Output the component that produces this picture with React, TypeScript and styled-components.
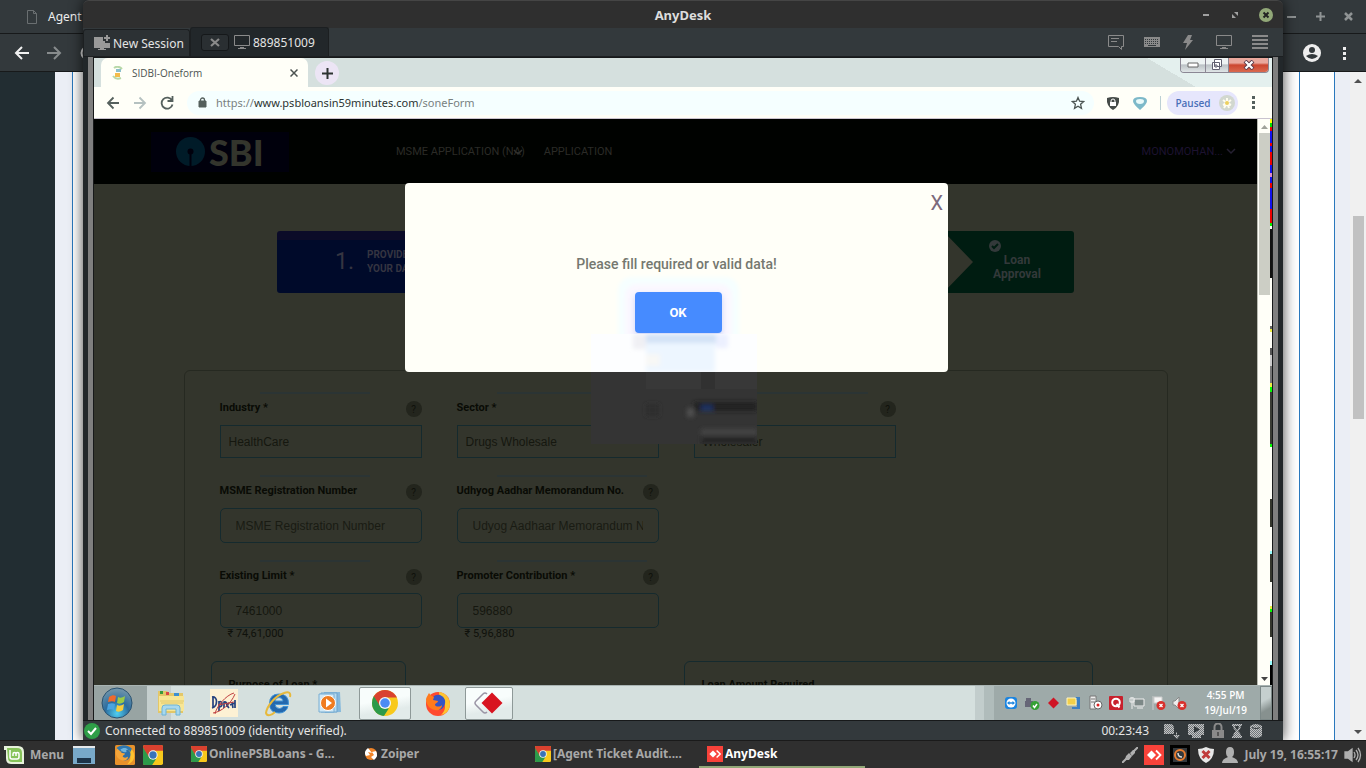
import React from 'react';
import styled, { createGlobalStyle, css } from 'styled-components';

const UI = '"Noto Sans", "Open Sans", sans-serif';
const REMOTE_UI = '"Open Sans", "Noto Sans", sans-serif';
const WEB = 'Roboto, "Liberation Sans", sans-serif';
const ARIAL = '"Liberation Sans", Arial, sans-serif';

const Global = createGlobalStyle`
  * { box-sizing: border-box; }
  body { margin: 0; font-family: ${UI}; background: #2e2e2e; }
  button { border: 0; padding: 0; background: none; font: inherit; color: inherit; display: flex; align-items: center; justify-content: center; }
  svg { display: block; flex: none; }
`;

/* ---------- desktop ---------- */
const Desktop = styled.div`
  position: relative;
  display: flex;
  flex-direction: column;
  height: 100vh;
  overflow: hidden;
`;
const BackWindow = styled.div`
  flex: 1;
  display: flex;
  flex-direction: column;
  min-height: 0;
`;
const BackBar = styled.div<{ $h: number }>`
  display: flex;
  align-items: center;
  justify-content: space-between;
  height: ${(p) => p.$h}px;
  background: #33393c;
  border-bottom: 1px solid #17191a;
  color: #eee;
  font-size: 12px;
`;
const BackGroup = styled.div<{ $gap: number; $pad: string }>`
  display: flex;
  align-items: center;
  gap: ${(p) => p.$gap}px;
  padding: ${(p) => p.$pad};
`;
const BackBody = styled.div`
  flex: 1;
  display: flex;
  min-height: 0;
`;
const Sidebar = styled.div`
  width: 55px;
  background: #222d32;
`;
const Gutter = styled.div<{ $w: number }>`
  width: ${(p) => p.$w}px;
  background: #ebeef5;
`;
const Panel = styled.div`
  flex: 1;
  display: flex;
  justify-content: flex-end;
  background: #fff;
  border: solid #2a78bd;
  border-width: 0 1px;
`;
const InnerPanel = styled.div`
  width: 35px;
  border-left: 1px solid #2a78bd;
`;
const ScrollTrack = styled.div`
  width: 16px;
  background: #f0f0f0;
  display: flex;
  flex-direction: column;
  align-items: center;
  justify-content: space-between;
  padding: 6px 0 5px;
`;
const BackThumb = styled.div`
  width: 11px;
  height: 203px;
  margin-bottom: 178px;
  background: #c1c1c1;
`;

/* ---------- AnyDesk window ---------- */
const AnyWindow = styled.section`
  position: absolute;
  left: 83px;
  right: 83px;
  top: 0;
  bottom: 28px;
  display: flex;
  flex-direction: column;
  border-radius: 6px 6px 0 0;
  background: #22272a;
  box-shadow: 0 0 14px rgba(0, 0, 0, 0.75);
`;
const TitleBar = styled.header`
  display: grid;
  grid-template-columns: 1fr auto 1fr;
  align-items: center;
  height: 28px;
  padding: 0 10px;
  border-top: 1px solid #454545;
  border-radius: 6px 6px 0 0;
  background: #2f2f2f;
  color: #ddd;
  font-size: 13px;
  font-weight: 700;
`;
const WinButtons = styled.div`
  grid-column: 3;
  justify-self: end;
  display: flex;
  align-items: center;
  gap: 19px;
`;
const TitleText = styled.span`
  grid-column: 2;
`;
const ToolRow = styled.div`
  display: flex;
  align-items: flex-end;
  height: 29px;
  background: #33393c;
  border-bottom: 1px solid #1c1f21;
`;
const SessionTab = styled.button<{ $active?: boolean }>`
  && {
    justify-content: flex-start;
    gap: 3px;
    height: ${(p) => (p.$active ? 29 : 27)}px;
    width: ${(p) => (p.$active ? 139 : 107)}px;
    padding-left: 10px;
    border: 1px solid #1c1f21;
    border-bottom: 0;
    border-radius: 3px 3px 0 0;
    background: ${(p) => (p.$active ? '#22272a' : '#2c3134')};
    color: #e4e4e4;
    font-size: 12px;
  }
`;
const TabClose = styled.span`
  display: flex;
  align-items: center;
  justify-content: center;
  width: 28px;
  height: 17px;
  margin-right: 2px;
  border: 1px solid #15181a;
  border-radius: 3px;
  background: #2a2f32;
`;
const ToolIcons = styled.div`
  display: flex;
  align-items: center;
  justify-content: space-between;
  width: 160px;
  height: 28px;
  margin: 0 15px 0 auto;
`;
const Stage = styled.div`
  flex: 1;
  display: flex;
  min-height: 0;
  margin: 0 5px;
  padding: 1px 0 0;
  border: solid #7f7f7f;
  border-width: 0 5px;
  background: #17191a;
`;
const Remote = styled.div`
  flex: 1;
  display: flex;
  flex-direction: column;
  min-width: 0;
  margin: 0 1px;
  background: #fffff8;
`;
const StatusBar = styled.footer`
  display: flex;
  align-items: center;
  gap: 5px;
  height: 20px;
  padding: 0 21px 0 1px;
  border-top: 1px solid #17191a;
  background: #33393c;
  color: #e4e4e4;
  font-size: 12px;
`;
const StatusIcons = styled.div`
  display: flex;
  align-items: center;
  justify-content: space-between;
  width: 98px;
  margin-left: 10px;
`;
const Grow = styled.span`
  flex: 1;
`;

/* ---------- remote browser ---------- */
const TabStrip = styled.div`
  display: flex;
  align-items: flex-start;
  height: 29px;
  padding: 0 3px 0 7px;
  background:
    linear-gradient(#e4f0ee, #e4f0ee) right / 76px 100% no-repeat,
    linear-gradient(to top right, transparent 50%, #e4f0ee 50%) right 76px top / 49px 29px no-repeat,
    #d5e0de;
`;
const BrowserTab = styled.div`
  display: flex;
  align-items: center;
  gap: 7px;
  width: 207px;
  height: 29px;
  padding: 0 10px;
  border-radius: 7px 7px 0 0;
  background: #fffff8;
  color: #4c5351;
  font-family: ${REMOTE_UI};
  font-size: 10px;
`;
const NewTab = styled.button`
  && {
    width: 24px;
    height: 24px;
    margin: 3px 0 0 7px;
    border-radius: 50%;
    background: #ece5f5;
  }
`;
const WinControls = styled.div`
  display: flex;
  height: 15px;
  border: 1px solid #8b8794;
  border-top: 0;
  border-radius: 0 0 4px 4px;
  overflow: hidden;
`;
const WinControl = styled.button<{ $w: number; $close?: boolean }>`
  && {
    width: ${(p) => p.$w}px;
    border-right: ${(p) => (p.$close ? 0 : 1)}px solid #8b8794;
    background: ${(p) =>
      p.$close
        ? 'linear-gradient(#e9a89d 0 35%, #cc4630 50%, #d9694f)'
        : 'linear-gradient(#eef3f3 0 40%, #bcc2c6 50%, #dfe5e6)'};
  }
`;
const AddressRow = styled.div`
  display: flex;
  align-items: center;
  height: 32px;
  padding: 0 6px 0 12px;
  border-bottom: 1px solid #c9c3cf;
  background: #fffff8;
`;
const NavIcons = styled.div`
  display: flex;
  gap: 13px;
  width: 81px;
`;
const Omnibox = styled.div`
  flex: 1;
  display: flex;
  align-items: center;
  gap: 9px;
  height: 24px;
  padding: 0 9px 0 11px;
  border-radius: 12px;
  background: #f5ffff;
  color: #79817f;
  font-family: ${UI};
  font-size: 11px;
`;
const UrlText = styled.div`
  flex: 1;
  outline: none;
`;
const Host = styled.span`
  color: #2c3331;
`;
const Extensions = styled.div`
  display: flex;
  align-items: center;
  gap: 13px;
  padding: 0 6px 0 12px;
`;
const Divider = styled.span`
  width: 1px;
  height: 14px;
  background: #bcd0d4;
`;
const Profile = styled.button`
  && {
    gap: 8px;
    width: 71px;
    height: 24px;
    margin-right: 14px;
    padding-left: 5px;
    border-radius: 12px;
    background: #e6e6fc;
    color: #4a6fb8;
    font-family: ${REMOTE_UI};
    font-size: 10px;
    font-weight: 600;
  }
`;

/* ---------- web page ---------- */
const Viewport = styled.div`
  flex: 1;
  display: flex;
  min-height: 0;
`;
const Page = styled.main`
  position: relative;
  flex: 1;
  min-width: 0;
  overflow: hidden;
  background: #33352c;
  font-family: ${WEB};
`;
const SiteNav = styled.nav`
  display: flex;
  align-items: center;
  height: 65px;
  padding: 0 21px 0 57px;
  background: #000200;
  color: #2b2b27;
  font-size: 11px;
`;
const Brand = styled.a`
  display: flex;
  align-items: center;
  gap: 4px;
  width: 138px;
  height: 40px;
  margin-right: 107px;
  padding-left: 25px;
  background: #00000c;
  color: #33352c;
  font-family: Lato, ${WEB};
  font-size: 36px;
  font-weight: 900;
  line-height: 40px;
  text-decoration: none;
`;
const NavLink = styled.a<{ $purple?: boolean }>`
  display: flex;
  align-items: center;
  gap: 3px;
  margin-right: ${(p) => (p.$purple ? 0 : 20)}px;
  color: ${(p) => (p.$purple ? '#1d1230' : 'inherit')};
  text-decoration: none;
`;
const Chevron = styled.svg<{ $over?: boolean }>`
  margin-left: ${(p) => (p.$over ? -16 : 0)}px;
`;
const Steps = styled.div`
  display: flex;
  justify-content: space-between;
  max-width: 797px;
  height: 62px;
  margin: 47px auto 0;
`;
const Step = styled.div<{ $done?: boolean }>`
  display: flex;
  align-items: center;
  width: 200px;
  border-radius: 3px;
  font-weight: 700;
  ${(p) =>
    p.$done
      ? css`
          background: #001c11;
          color: #33393a;
          font-size: 12px;
          line-height: 14px;
          clip-path: polygon(69px 0, 100% 0, 100% 100%, 69px 100%, 99px 50%);
        `
      : css`
          padding: 0 0 0 58px;
          gap: 13px;
          background: linear-gradient(#0b0b28 0 9px, #000a2a 9px);
          color: #353541;
          font-size: 10px;
          line-height: 14px;
        `}
`;
const StepNumber = styled.span`
  font-size: 23px;
  font-weight: 400;
`;
const DoneText = styled.div`
  display: flex;
  flex-direction: column;
  align-items: center;
  width: 70px;
  margin: 0 0 3px 108px;
  text-align: center;
`;
const DoneTick = styled.svg`
  margin: 0 44px 1px 0;
`;
const FormCard = styled.form`
  max-width: 984px;
  height: 400px;
  margin: 77px auto 0;
  padding: 30px 26px 0;
  border: 1px solid #262921;
  border-radius: 6px;
`;
const FieldGrid = styled.div`
  display: grid;
  grid-template-columns: repeat(3, 1fr);
  column-gap: 35px;
  row-gap: 26px;
  max-width: 676px;
  margin-left: 9px;
`;
const Field = styled.div<{ $streak?: number }>`
  position: relative;
  display: grid;
  grid-template-columns: 1fr 16px;
  row-gap: 8px;
  align-content: start;
  &::before {
    content: '';
    position: absolute;
    top: -9px;
    left: 40px;
    width: ${(p) => p.$streak ?? 110}px;
    height: 2px;
    background: #2b3434;
  }
`;
const FieldLabel = styled.label`
  display: block;
  color: #090b05;
  font-size: 11px;
  font-weight: 700;
  line-height: 13px;
  white-space: nowrap;
`;
const Help = styled.button`
  && {
    width: 16px;
    height: 16px;
    border-radius: 50%;
    background: #23251d;
    color: #0f110b;
    font-size: 10px;
  }
`;
const FieldInput = styled.input<{ $square?: boolean }>`
  grid-column: 1 / -1;
  width: 100%;
  min-width: 0;
  height: ${(p) => (p.$square ? 33 : 35)}px;
  padding: 0 ${(p) => (p.$square ? 8 : 15)}px;
  border: 1px solid #152a2e;
  border-radius: ${(p) => (p.$square ? 0 : 5)}px;
  background: transparent;
  color: #15170f;
  font-family: ${ARIAL};
  font-size: 12px;
  outline: none;
  &::placeholder { color: #191b13; opacity: 1; }
`;
const Hint = styled.output`
  grid-column: 1 / -1;
  margin-top: -8px;
  padding-left: 8px;
  color: #0f110b;
  font-size: 11px;
  line-height: 12px;
`;
const BoxRow = styled.div`
  display: flex;
  justify-content: space-between;
  margin: 21px 48px 0 0;
`;
const Box = styled.div<{ $w: number }>`
  width: ${(p) => p.$w}px;
  height: 90px;
  padding: 16px 17px;
  border: 1px solid #152a2e;
  border-radius: 6px;
`;

const DialogLayer = styled.div`
  position: absolute;
  inset: 64px 0 auto 2px;
  display: flex;
  justify-content: center;
`;
const Dialog = styled.div`
  position: relative;
  display: flex;
  flex-direction: column;
  align-items: center;
  width: 543px;
  height: 189px;
  padding-top: 72px;
  border-radius: 4px;
  background: #fffff8;
  color: #757870;
  font-size: 14px;
  font-weight: 500;
  line-height: 18px;
`;
const DialogClose = styled.button`
  && {
    position: absolute;
    top: 9px;
    right: 5px;
    color: #7c6a7c;
    font-size: 20px;
    font-weight: 400;
    line-height: 22px;
  }
`;
const OkButton = styled.button`
  && {
    position: relative;
    width: 87px;
    height: 41px;
    margin: 19px 0 0 3px;
    border-radius: 4px;
    background: #468bff;
    color: #fff;
    font-size: 13px;
    font-weight: 700;
    box-shadow: 0 3px 6px rgba(70, 110, 220, 0.25), 0 2px 4px 10px #fbf8ff, 0 2px 4px 17px #f6ffff;
  }
`;
const Artifact = styled.svg`
  position: absolute;
  top: 151px;
  left: 186px;
`;
const RemoteScroll = styled.div`
  display: flex;
  flex-direction: column;
  align-items: center;
  width: 13px;
  padding: 6px 0 4px;
  border-left: 1px solid #b9bbb2;
  background: #fffff8;
`;
const RemoteThumb = styled.div`
  width: 11px;
  height: 162px;
  margin: 4px 0 auto;
  background: #cccec5;
`;
const GlitchStrip = styled.div`
  width: 2px;
  background: linear-gradient(
    #ff0 0 4px, #0d0 4px 8px, #e00 8px 12px, #11e 12px 24px, #e00 24px 27px, #11e 27px 33px,
    #e00 33px 46px, #11e 46px 54px, #d8c 54px 58px, #11e 58px 64px, #e00 64px 69px, #11e 69px 90px,
    #e00 90px 104px, #0e0 104px 107px, #fffff8 107px 110px, #111 110px 159px, #fffff8 159px 207px,
    #666 207px 210px, #ee4 210px 213px, #fffff8 213px 229px, #555 229px 236px, #ccc 236px 247px,
    #777 247px 264px, #ee4 264px 268px, #0f0 268px 273px, #3a3c34 273px 325px, #0f0 325px 328px,
    #fffff8 328px 380px, #33352c 380px 408px, #fffff8 408px 432px, #9ff 432px 435px, #33352c 435px 463px,
    #fffff8 463px 487px, #ee4 487px 490px, #0f0 490px 493px, #33352c 493px 518px, #fffff8 518px 542px,
    #9ff 542px 546px, #000 546px
  );
`;

/* ---------- remote taskbar ---------- */
const RemoteTaskbar = styled.div`
  display: flex;
  align-items: center;
  height: 35px;
  border-top: 1px solid #a9b4b3;
  background: linear-gradient(90deg, #98a4a3 0 53px, #c5cfce 53px 77px, transparent 77px), #d5e0de;
`;
const AppSlot = styled.button<{ $w: number; $open?: boolean }>`
  && {
    width: ${(p) => p.$w}px;
    height: 33px;
    border-radius: 2px;
    ${(p) =>
      p.$open &&
      css`
        border: 1px solid #8e9998;
        background: linear-gradient(170deg, #f8fdfc 0 40%, #e2ebea 70%);
      `}
  }
`;
const OpenApps = styled.div`
  display: flex;
  margin-left: 9px;
`;
const Tray = styled.div`
  display: flex;
  align-items: center;
  align-self: stretch;
  gap: 5px;
  margin-left: auto;
  padding: 0 13px 0 28px;
  background: linear-gradient(90deg, #c2cdcc 0 9px, #b0bcbb 9px 19px, #9eaaa9 19px);
`;
const RemoteClock = styled.div`
  margin-left: 12px;
  color: #fff;
  font-family: ${REMOTE_UI};
  font-size: 10px;
  font-weight: 600;
  line-height: 15px;
  text-align: center;
`;
const ShowDesktop = styled.div`
  align-self: stretch;
  width: 12px;
  border: 1px solid #7c8887;
  background: linear-gradient(150deg, #c5cfce 0 40%, #87918f 70%);
`;

/* ---------- host panel ---------- */
const HostPanel = styled.footer`
  position: relative;
  display: flex;
  align-items: center;
  height: 28px;
  padding: 0 4px;
  border-top: 1px solid #1a1a1a;
  background: #2f2f2f;
  color: #a8a8a8;
  font-size: 12px;
  font-weight: 700;
`;
const Launchers = styled.div`
  display: flex;
  align-items: center;
  width: 179px;
`;
const MenuButton = styled.button`
  && {
    gap: 6px;
    margin-right: 9px;
  }
`;
const QuickIcons = styled.div`
  display: flex;
  gap: 8px;
  margin-left: 20px;
`;
const Tasks = styled.div`
  display: flex;
  align-self: stretch;
  gap: 6px;
`;
const Task = styled.button<{ $active?: boolean }>`
  && {
    justify-content: flex-start;
    gap: 2px;
    width: 166px;
    padding: 0 8px;
    border-bottom: 2px solid ${(p) => (p.$active ? '#92a878' : 'transparent')};
    color: ${(p) => (p.$active ? '#fff' : '#a8a8a8')};
  }
`;
const HostTray = styled.div`
  display: flex;
  align-items: center;
  gap: 6px;
  margin-left: auto;
`;

/* ---------- icons ---------- */
const Line = ({ d, w = 16, h = 16, s = '#999', sw = 1.5 }: { d: string; w?: number; h?: number; s?: string; sw?: number }) => (
  <svg width={w} height={h} viewBox={`0 0 ${w} ${h}`} fill="none" stroke={s} strokeWidth={sw}>
    <path d={d} />
  </svg>
);

const ChromeIcon = ({ size, square }: { size: number; square?: boolean }) => (
  <svg width={size} height={size} viewBox="0 0 24 24">
    <defs>
      <clipPath id={square ? 'chromeSq' : 'chromeRd'}>
        {square ? <rect width="24" height="24" rx="2" /> : <circle cx="12" cy="12" r="12" />}
      </clipPath>
    </defs>
    <g clipPath={`url(#${square ? 'chromeSq' : 'chromeRd'})`}>
      <path d="M0 0h24v24H0z" fill="#f8c91c" />
      <path d="M0 0h24v7H12L7 15 0 4z" fill="#d9412f" />
      <path d="M0 3l7.500 12 8 2L11 24H0z" fill="#2d9a4a" />
      <circle cx="12" cy="12" r="5.600" fill="#f4f4f4" />
      <circle cx="12" cy="12" r="4.400" fill={square ? '#3873b8' : '#4c8bf5'} />
    </g>
  </svg>
);

const FirefoxIcon = ({ size, square }: { size: number; square?: boolean }) => (
  <svg width={size} height={size} viewBox="0 0 26 26">
    {square ? <rect width="26" height="26" rx="2" fill="#e8912a" /> : <circle cx="13" cy="14" r="12" fill="#ff4a2e" />}
    <path d="M14 2c5 0 11 5 11 12 0 6-4 10-9 11 4-4 5-8 3-12-2-3-5-5-5-11z" fill="#ffc42e" />
    <path d="M8 7c4-4 10-2 12 3 1 6-3 10-7 10-5 0-8-4-7-8z" fill={square ? '#2c6ea8' : '#3454c4'} />
    <path d="M1 9c1-3 2-4 3-6 1 2 3 3 5 4l-1 3 5 1c0 2-3 2-3 4 1 2 5 2 7 0 0 4-4 6-7 5C4 19 1 14 1 9z" fill={square ? '#f4a53a' : '#ff7a1c'} />
    {square && <path d="M2 4c5-5 15-5 20 1l-2 4c-3-4-9-4-12 0z" fill="#2f78b0" />}
    {square && <path d="M7 6c3-3 8-3 10 0-2 0-3 1-2 3-3 1-6 0-8-3z" fill="#6fb4dd" />}
  </svg>
);

const AnyDeskTile = ({ size }: { size: number }) => (
  <svg width={size} height={size} viewBox="0 0 20 20">
    <rect width="20" height="20" fill="#f8423a" />
    <path d="M7.500 5.500L12 10l-4.500 4.500L3 10z" fill="#fff" />
    <path d="M12 5.500l4.500 4.500-4.500 4.500" fill="none" stroke="#fff" strokeWidth="1.800" />
  </svg>
);

const StartOrb = () => (
  <svg width="32" height="32" viewBox="0 0 32 32">
    <defs>
      <radialGradient id="orb" cx="50%" cy="85%" r="80%">
        <stop offset="0" stopColor="#4fd0f2" />
        <stop offset=".5" stopColor="#2c6c9e" />
        <stop offset="1" stopColor="#6f94aa" />
      </radialGradient>
    </defs>
    <circle cx="16" cy="16" r="15" fill="url(#orb)" stroke="#2a5270" />
    <path d="M8 10c3-2 5-2 7-1l-1 6c-2-1-4-1-7 0z" fill="#ee6a2e" />
    <path d="M17 10c2 1 4 1 7-1l-1 6c-3 2-5 2-7 1z" fill="#9ccb46" />
    <path d="M7 17c3-1 5-1 7 0l-1 6c-2-1-4-1-7 0z" fill="#4aa4e0" />
    <path d="M16 18c2 1 4 1 7-1l-1 6c-3 2-5 2-7 1z" fill="#f8cc3c" />
  </svg>
);

const ExplorerIcon = () => (
  <svg width="30" height="28" viewBox="0 0 30 28">
    <path d="M2 2h9l2 2h14v20H2z" fill="#e3c768" />
    <path d="M3 7h25v15H3z" fill="#f8e694" />
    <path d="M4 2h3v3H4z" fill="#3a9a3c" />
    <path d="M10 3h3v3h-3z" fill="#d44" />
    <path d="M18 4h5v3h-5z" fill="#3d8fd0" />
    <path d="M4 12h24M5 14h22" stroke="#e0c86c" />
    <path d="M6 26v-7q0-3 3-3h12q3 0 3 3v7h-4v-6H10v6z" fill="#a7d8ee" stroke="#6db3d6" />
  </svg>
);

const ScriptIcon = () => (
  <svg width="28" height="28" viewBox="0 0 28 28" fill="none">
    <path d="M0 0h28v28H0z" fill="#fdf1d4" />
    <path d="M3 8v11M2 8c6-1 6 9 0 11M9 12v10M9 13c4-2 4 5 0 5M14 19v-6q3-1 3 5M19 14q-3 2 0 5M22 13l1 6M20 16l5-2M25 11v8" stroke="#24417e" strokeWidth="1.700" />
    <path d="M24 4C16 6 6 18 5 25M3 24c8-1 18-9 22-19M8 16l16-3" stroke="#c04040" />
  </svg>
);

const IeIcon = () => (
  <svg width="28" height="28" viewBox="0 0 28 28" fill="none">
    <path d="M24.500 15.500H11q.500 4 4.500 4 2.500 0 3.500-2h5q-2 6.500-9 6.500Q5.500 24 5.500 14.500 5.500 5 15 5q10 0 9.500 10.500zM11 12h8q-.500-3.500-4-3.500T11 12z" fill="#2468ae" fillRule="evenodd" stroke="#3f93d6" />
    <path d="M26 8c1-4-1-6-6-4C11 7 3 17 2 24c1 4 6 2 9-1" stroke="#e7b93c" strokeWidth="2" />
  </svg>
);

const PlayerIcon = () => (
  <svg width="24" height="24" viewBox="0 0 24 24">
    <path d="M6 1h16l1 20-16 1z" fill="#87b9dc" />
    <path d="M3 2h16v19H3z" fill="#b8dbef" stroke="#6fa5cd" />
    <path d="M1 3h15v18H1z" fill="#cfe8f6" stroke="#78aed3" />
    <circle cx="10" cy="12" r="7.500" fill="#f07c20" stroke="#fff" />
    <path d="M8 7.500l6 4.500-6 4.500z" fill="#fff" />
  </svg>
);

const RemoteAnyDesk = () => (
  <svg width="30" height="24" viewBox="0 0 30 24">
    <path d="M13 3q-2-2-4 0L2 10q-2 2 0 4l7 7q2 2 4 0" fill="none" stroke="#9a95a5" strokeWidth="1.500" />
    <path d="M18 1.500L28.500 12 18 22.500 7.500 12z" fill="#d81420" />
  </svg>
);

const PixelIcon = ({ shape, w = 14 }: { shape: string; w?: number }) => (
  <svg width={w} height="16" viewBox={`0 0 ${w} 16`}>
    <defs>
      <pattern id="dither" width="2" height="2" patternUnits="userSpaceOnUse">
        <path d="M0 0h1v1H0zM1 1h1v1H1z" fill="#c4c4c4" />
        <path d="M1 0h1v1H1zM0 1h1v1H0z" fill="#70767a" />
      </pattern>
    </defs>
    <path d={shape} fill="url(#dither)" fillRule="evenodd" />
  </svg>
);

const FormField = (props: { id: string; label: string; value?: string; placeholder?: string; square?: boolean; hint?: string; streak?: number }) => (
  <Field $streak={props.streak}>
    <FieldLabel htmlFor={props.id}>{props.label}</FieldLabel>
    <Help type="button" aria-label={`Help: ${props.label}`}>?</Help>
    <FieldInput id={props.id} $square={props.square} defaultValue={props.value} placeholder={props.placeholder} />
    {props.hint && <Hint htmlFor={props.id}>{props.hint}</Hint>}
  </Field>
);

export default function App() {
  return (
    <Desktop>
      <Global />
      <BackWindow>
        <BackBar $h={34}>
          <BackGroup $gap={11} $pad="0 0 0 27px">
            <Line w={10} h={14} s="#6a6f71" sw={1} d="M.500.500h6l3 3v10h-9zM6.500.500v3h3" />
            <span>Agent</span>
          </BackGroup>
          <BackGroup $gap={18} $pad="0 13px 0 0">
            <Line w={11} h={11} s="#8f9394" sw={2} d="M1 6h9" />
            <Line w={11} h={11} s="#8f9394" sw={2} d="M1 5.500h9M5.500 1v9" />
            <Line w={9} h={11} s="#8f9394" sw={2.5} d="M1 2l7 7M8 2l-7 7" />
          </BackGroup>
        </BackBar>
        <BackBar $h={38}>
          <BackGroup $gap={16} $pad="0 0 0 14px">
            <Line s="#f1f1f1" sw={2} d="M15 8H2M8 2L2 8l6 6" />
            <Line s="#888c8d" sw={2} d="M1 8h13M8 2l6 6-6 6" />
            <Line s="#ddd" sw={2} d="M14 4a6 6 0 1 0 0 8" />
          </BackGroup>
          <BackGroup $gap={22} $pad="0 20px 0 0">
            <svg width="18" height="18" viewBox="0 0 18 18">
              <circle cx="9" cy="9" r="9" fill="#eee" />
              <circle cx="9" cy="6" r="3" fill="#33393c" />
              <path d="M3 12q6-4 12 0-6 6-12 0z" fill="#33393c" />
            </svg>
            <svg width="3" height="14" viewBox="0 0 3 14" fill="#eee"><path d="M0 1h3v3H0zM0 6h3v3H0zM0 11h3v3H0z" /></svg>
          </BackGroup>
        </BackBar>
        <BackBody>
          <Sidebar />
          <Gutter $w={17} />
          <Panel><InnerPanel /></Panel>
          <Gutter $w={15} />
          <ScrollTrack>
            <svg width="8" height="5"><path d="M0 5l4-4 4 4z" fill="#505050" /></svg>
            <BackThumb />
            <svg width="8" height="5"><path d="M0 0l4 4 4-4z" fill="#505050" /></svg>
          </ScrollTrack>
        </BackBody>
      </BackWindow>

      <AnyWindow>
        <TitleBar>
          <TitleText>AnyDesk</TitleText>
          <WinButtons>
            <button aria-label="Minimize"><Line w={10} h={10} s="#a0a0a0" sw={2} d="M2 5h6" /></button>
            <button aria-label="Restore"><svg width="10" height="10" fill="#a0a0a0"><path d="M4 2h4v4zM2 4v4h4z" /></svg></button>
            <button aria-label="Close">
              <svg width="14" height="14"><circle cx="7" cy="7" r="7" fill="#92a878" /><path d="M4.500 4.500l5 5M9.500 4.500l-5 5" stroke="#222" strokeWidth="2" /></svg>
            </button>
          </WinButtons>
        </TitleBar>
        <ToolRow>
          <SessionTab>
            <svg width="16" height="16" viewBox="0 0 16 16" fill="#999"><path d="M0 2h9v4h2v2h5v5H0zM6 13h4v1h2v1H4v-1h2zM12 0h2v2h2v2h-2v2h-2V4h-2V2h2z" /></svg>
            New Session
          </SessionTab>
          <SessionTab $active>
            <TabClose><Line w={12} h={9} s="#8a8a8a" sw={2.2} d="M2 1l8 7M10 1L2 8" /></TabClose>
            <Line s="#8a8a8a" sw={1} h={14} d="M.500.500h15v10h-15zM6 12.500h4M4 13.500h8" />
            889851009
          </SessionTab>
          <ToolIcons>
            <button aria-label="Chat"><Line h={15} s="#8a8a8a" sw={1} d="M.500.500h15v11h-2v3l-3-3H.500zM3 3.500h8M3 6.500h6" /></button>
            <button aria-label="Keyboard"><svg width="16" height="10"><path d="M0 0h16v10H0z" fill="#8a8a8a" /><path d="M1 2.500h14M1 4.500h14M1 6.500h14" stroke="#33393c" strokeDasharray="1 1" /><path d="M4 8.500h8" stroke="#33393c" /></svg></button>
            <button aria-label="Actions"><svg width="16" height="15"><path d="M8 0h4L10 5h3L5 15l2-7H3z" fill="#8a8a8a" /></svg></button>
            <button aria-label="Display"><Line h={14} s="#8a8a8a" sw={1} d="M.500.500h15v10h-15zM6 12.500h4M4 13.500h8" /></button>
            <button aria-label="Menu"><Line h={14} s="#8a8a8a" sw={2} d="M0 1h16M0 5h16M0 9h16M0 13h16" /></button>
          </ToolIcons>
        </ToolRow>

        <Stage>
          <Remote>
            <TabStrip>
              <BrowserTab>
                <svg width="14" height="14" viewBox="0 0 14 14" fill="none">
                  <path d="M3 2q4-3 8 1M2 10q3 4 8 2" stroke="#b8d8a8" strokeWidth="2" />
                  <path d="M5 3h5v3H5z" fill="#8cc0cc" /><path d="M4 7h5v4H4z" fill="#f4bc4a" />
                </svg>
                <span>SIDBI-Oneform</span>
                <Grow />
                <button aria-label="Close tab"><Line w={8} h={8} s="#4c5351" d="M.500.500l7 7M7.500.500l-7 7" /></button>
              </BrowserTab>
              <NewTab aria-label="New tab"><Line w={11} h={11} s="#2c3331" sw={2} d="M5.500 0v11M0 5.500h11" /></NewTab>
              <Grow />
              <WinControls>
                <WinControl $w={25} aria-label="Minimize"><svg width="12" height="6"><path d="M1 1h10v4H1z" fill="#fff" stroke="#666" /></svg></WinControl>
                <WinControl $w={23} aria-label="Restore"><svg width="12" height="12" fill="#fff" stroke="#606070"><path d="M3.500.500h7v7h-7zM1.500 3.500h7v7h-7z" /><path d="M4 6h2v2H4z" /></svg></WinControl>
                <WinControl $w={39} $close aria-label="Close"><svg width="12" height="10"><path d="M2 1l8 8M10 1L2 9" stroke="#5a3a4a" strokeWidth="4" /><path d="M2.500 1.500l7 7M9.500 1.500l-7 7" stroke="#fff" strokeWidth="2.200" /></svg></WinControl>
              </WinControls>
            </TabStrip>
            <AddressRow>
              <NavIcons>
                <button aria-label="Back"><Line w={14} h={14} s="#55605d" sw={1.8} d="M13 7H2M7.500 1.500L2 7l5.500 5.500" /></button>
                <button aria-label="Forward"><Line w={14} h={14} s="#b5c1c0" sw={1.8} d="M1 7h11M6.500 1.500L12 7l-5.500 5.500" /></button>
                <button aria-label="Reload"><Line w={14} h={14} s="#55605d" sw={1.8} d="M12 4.500a5.500 5.500 0 1 0 .500 4M12.500 0v5h-5" /></button>
              </NavIcons>
              <Omnibox>
                <svg width="9" height="11"><path d="M1 4h7v6H1z" fill="#55605d" stroke="#55605d" /><path d="M2.500 4V3a2 2 0 0 1 4 0v1" fill="none" stroke="#55605d" strokeWidth="1.300" /></svg>
                <UrlText role="textbox" aria-label="Address" contentEditable suppressContentEditableWarning>
                  https://<Host>www.psbloansin59minutes.com</Host>/soneForm
                </UrlText>
                <button aria-label="Bookmark"><Line w={14} h={14} s="#4c5553" sw={1.3} d="M7 1.500l1.600 3.700 4 .400-3 2.700.900 4L7 10.200l-3.500 2.100.900-4-3-2.700 4-.400z" /></button>
              </Omnibox>
              <Extensions>
                <svg width="14" height="14"><path d="M1 2q6-2 12 0 1 8-6 12Q0 10 1 2z" fill="#454b48" /><path d="M4 6h6v4H4z" fill="#fff" /><path d="M5 6V5a2 2 0 0 1 4 0v1" stroke="#fff" fill="none" /></svg>
                <svg width="14" height="14"><path d="M0 5q0-4 7-4t7 4q0 3-7 9Q0 8 0 5z" fill="#7db9c9" /><path d="M3 5q0-2 4-2t4 2q0 3-4 3T3 5z" fill="#eafafa" /></svg>
                <Divider />
              </Extensions>
              <Profile>
                Paused
                <svg width="16" height="16"><circle cx="8" cy="8" r="8" fill="#d2d8cf" /><path d="M8 8V3M8 8l4-3M8 8l4 2M8 8l2 5M8 8l-3 5M8 8l-4 2M8 8L4 5" stroke="#fffdf0" strokeWidth="2" /><circle cx="8" cy="8" r="2" fill="#ecd060" /></svg>
              </Profile>
              <button aria-label="Browser menu"><svg width="14" height="13" fill="#55605d"><path d="M0 0h3v3H0zM0 5h3v3H0zM0 10h3v3H0z" /></svg></button>
            </AddressRow>

            <Viewport>
              <Page>
                <SiteNav>
                  <Brand href="#home">
                    <svg width="29" height="29"><circle cx="14.500" cy="14.500" r="14.500" fill="#001b28" /><circle cx="14.500" cy="14.500" r="3" fill="#00000c" /><path d="M13.500 15h2v14h-2z" fill="#00000c" /></svg>
                    SBI
                  </Brand>
                  <NavLink href="#msme">
                    MSME APPLICATION (NA)
                    <Chevron $over width="12" height="8" fill="none" stroke="#30302c" strokeWidth="1.500"><path d="M2 2l4 4 4-4" /></Chevron>
                  </NavLink>
                  <NavLink href="#application">APPLICATION</NavLink>
                  <Grow />
                  <NavLink href="#account" $purple>
                    MONOMOHAN...
                    <Chevron width="10" height="7" fill="none" stroke="#242030" strokeWidth="1.500"><path d="M1 1l4 4 4-4" /></Chevron>
                  </NavLink>
                </SiteNav>
                <Steps>
                  <Step>
                    <StepNumber>1.</StepNumber>
                    <span>PROVIDE<br />YOUR DATA</span>
                  </Step>
                  <Step $done>
                    <DoneText>
                      <DoneTick width="12" height="12"><circle cx="6" cy="6" r="6" fill="#33393a" /><path d="M3 6l2 2 4-4" stroke="#001c11" strokeWidth="2" fill="none" /></DoneTick>
                      <span>Loan<br />Approval</span>
                    </DoneText>
                  </Step>
                </Steps>
                <FormCard>
                  <FieldGrid>
                    <FormField id="industry" label="Industry *" value="HealthCare" square />
                    <FormField id="sector" label="Sector *" value="Drugs Wholesale" square streak={150} />
                    <FormField id="subsector" label="" value="Wholesaler" square streak={134} />
                    <FormField id="msme" label="MSME Registration Number" placeholder="MSME Registration Number" />
                    <FormField id="udyog" label="Udhyog Aadhar Memorandum No." placeholder="Udyog Aadhaar Memorandum Number" streak={150} />
                    <span />
                    <FormField id="limit" label="Existing Limit *" value="7461000" hint="₹ 74,61,000" />
                    <FormField id="promoter" label="Promoter Contribution *" value="596880" hint="₹ 5,96,880" streak={150} />
                  </FieldGrid>
                  <BoxRow>
                    <Box $w={195}><FieldLabel as="span">Purpose of Loan *</FieldLabel></Box>
                    <Box $w={409}><FieldLabel as="span">Loan Amount Required</FieldLabel></Box>
                  </BoxRow>
                </FormCard>
                <DialogLayer>
                  <Dialog role="dialog" aria-label="Validation message">
                    <DialogClose aria-label="Close">X</DialogClose>
                    Please fill required or valid data!
                    <OkButton>OK</OkButton>
                    <Artifact width="166" height="110" aria-hidden="true">
                      <defs>
                        <filter id="soft"><feGaussianBlur stdDeviation="2" /></filter>
                      </defs>
                      <path d="M0 0h166v38H0z" fill="#fdfeff" />
                      <g filter="url(#soft)">
                        <path d="M55 0h70v10H55z" fill="#d3e2f6" />
                        <path d="M55 9h69v29H55z" fill="#edf6ff" />
                        <path d="M42 0h13v15H42z" fill="#f0f0f4" />
                        <path d="M125 0h12v14h-12z" fill="#ecf0ff" />
                        <path d="M55 20h14v12H55z" fill="#f8f8f6" />
                      </g>
                      <path d="M0 38h166v72H0z" fill="#343434" />
                      <path d="M55 38h111v17H55z" fill="#383838" />
                      <path d="M110 38h14v17h-14z" fill="#313131" />
                      <g filter="url(#soft)">
                        <path d="M103 68h63v9h-63z" fill="#202020" />
                        <path d="M110 71h12v6h-12z" fill="#1a3262" />
                        <path d="M96 74h7v9h-7z" fill="#505050" />
                        <path d="M55 70h13v12H55z" fill="#2d2d2d" />
                        <path d="M110 95h56v6h-56z" fill="#444" />
                        <path d="M110 103h56v7h-56z" fill="#252525" />
                      </g>
                    </Artifact>
                  </Dialog>
                </DialogLayer>
              </Page>
              <RemoteScroll>
                <svg width="7" height="4"><path d="M0 4l3.500-4L7 4z" fill="#a0a29a" /></svg>
                <RemoteThumb />
                <svg width="7" height="4"><path d="M0 0l3.500 4L7 0z" fill="#444" /></svg>
              </RemoteScroll>
              <GlitchStrip />
            </Viewport>

            <RemoteTaskbar>
              <AppSlot $w={46} aria-label="Start"><StartOrb /></AppSlot>
              <AppSlot $w={62} aria-label="Explorer"><ExplorerIcon /></AppSlot>
              <AppSlot $w={44} aria-label="Scanner"><ScriptIcon /></AppSlot>
              <AppSlot $w={64} aria-label="Internet Explorer"><IeIcon /></AppSlot>
              <AppSlot $w={40} aria-label="Media Player"><PlayerIcon /></AppSlot>
              <OpenApps>
                <AppSlot $w={52} $open aria-label="Chrome"><ChromeIcon size={26} /></AppSlot>
                <AppSlot $w={54} aria-label="Firefox"><FirefoxIcon size={26} /></AppSlot>
                <AppSlot $w={48} $open aria-label="AnyDesk"><RemoteAnyDesk /></AppSlot>
              </OpenApps>
              <Tray>
                <svg width="16" height="16"><rect x="2" y="2" width="12" height="12" rx="3" fill="#1b84e0" /><circle cx="8" cy="8" r="4.500" fill="#fff" /><path d="M4 8l2.500-2v1.300h3V6L12 8l-2.500 2V8.700h-3V10z" fill="#1b84e0" /></svg>
                <svg width="16" height="16"><path d="M2 3h5v3h2v6H1V6h1z" fill="#667" /><circle cx="11" cy="10.500" r="4.500" fill="#35a035" /><path d="M9 10.500l1.500 2L13 9" stroke="#fff" strokeWidth="1.500" fill="none" /></svg>
                <svg width="16" height="16"><path d="M8.500 2.500L14 8l-5.500 5.500L3 8z" fill="#cf1424" /></svg>
                <svg width="16" height="16"><path d="M9 2h5v12H6v-2h5V5H9z" fill="#3b7fc4" /><path d="M1 3h9v7H1z" fill="#f2cf4a" stroke="#fff6c0" /></svg>
                <svg width="16" height="16"><path d="M3 1h6v13H3z" fill="#eee" stroke="#777" /><path d="M4 4h4M4 7h4" stroke="#777" /><circle cx="11" cy="10" r="4" fill="#fff" stroke="#666" /><circle cx="11" cy="10" r="1.500" fill="#d22" /></svg>
                <svg width="16" height="16"><rect x="1" y="1" width="14" height="14" rx="1" fill="#c8202c" /><circle cx="8" cy="7.500" r="3.800" fill="none" stroke="#fff" strokeWidth="2" /><path d="M8.500 9l3 3.500" stroke="#fff" strokeWidth="2" /></svg>
                <svg width="16" height="16"><path d="M5 4h10v7H5zM8 13h6" fill="#7c8887" stroke="#eee" /><path d="M3 2v12M1 3h4v4H1z" stroke="#eee" fill="none" /></svg>
                <svg width="16" height="16"><path d="M3 1v14M4 2h8v6H4z" fill="#f4f4f4" stroke="#ccc" /><circle cx="11" cy="10.500" r="4.500" fill="#d8302c" /><path d="M9.500 9l3 3M12.500 9l-3 3" stroke="#fff" strokeWidth="1.300" /></svg>
                <svg width="16" height="16"><path d="M2 6h2l4-4v12l-4-4H2z" fill="#eee" stroke="#888" /><circle cx="11" cy="10.500" r="4.500" fill="#d8302c" /><path d="M9.500 9l3 3M12.500 9l-3 3" stroke="#fff" strokeWidth="1.300" /></svg>
                <RemoteClock>4:55 PM<br />19/Jul/19</RemoteClock>
              </Tray>
              <ShowDesktop />
            </RemoteTaskbar>
          </Remote>
        </Stage>

        <StatusBar>
          <svg width="16" height="16"><circle cx="8" cy="8" r="8" fill="#2f9e48" /><path d="M4 8l3 3 5-6" stroke="#fff" strokeWidth="2" fill="none" /></svg>
          <span>Connected to 889851009 (identity verified).</span>
          <Grow />
          <span>00:23:43</span>
          <StatusIcons>
            <PixelIcon w={16} shape="M0 1h6q4 0 4 5v5H0zM9 12h3v-3h1v3h3l-3 4z" />
            <PixelIcon w={16} shape="M0 1h16v11h-3v3H4v-3H0zM6 3v7l6-3.500z" />
            <svg width="12" height="16"><path d="M2.500 7V4a3.500 3.500 0 0 1 7 0v3" fill="none" stroke="#8a8a8a" strokeWidth="2" /><path d="M0 7h12v8H0z" fill="#8a8a8a" /><path d="M5 9h2v4H5z" fill="#555" /></svg>
            <PixelIcon w={10} shape="M0 1h10v2H9q0 3-3 5 3 2 3 5h1v2H0v-2h1q0-3 3-5-3-2-3-5H0zM3 3h4q0 2-2 4-2-2-2-4z" />
            <PixelIcon w={12} shape="M0 3q6-4 12 0v10q-6 4-12 0zM2 4q4 2 8 0v1q-4 2-8 0z" />
          </StatusIcons>
        </StatusBar>
      </AnyWindow>

      <HostPanel>
        <Launchers>
          <MenuButton>
            <svg width="20" height="20"><path d="M0 1h14q6 0 6 6v12H7q-5 0-5-6V5H0z" fill="#e8f2dc" /><path d="M3 3h10q5 0 5 5v9H8q-4 0-4-4z" fill="#87c35a" /><path d="M6 5v7q0 2 2 2h5q2 0 2-2V9q0-1.500-1.500-1.500T12 9v2M12 9q0-1.500-1.500-1.500T9 9v2" fill="none" stroke="#fff" strokeWidth="1.500" /></svg>
            Menu
          </MenuButton>
          <button aria-label="Show desktop">
            <svg width="22" height="18"><path d="M0 0h22v18H0z" fill="#78a8c8" /><path d="M0 0h22v2H0z" fill="#e4e8ea" /><path d="M4 12h14v5H4z" fill="#1d3348" /></svg>
          </button>
          <QuickIcons>
            <button aria-label="Firefox"><FirefoxIcon size={20} square /></button>
            <button aria-label="Chrome"><ChromeIcon size={20} square /></button>
          </QuickIcons>
        </Launchers>
        <Tasks>
          <Task><ChromeIcon size={16} square />OnlinePSBLoans - G...</Task>
          <Task>
            <svg width="16" height="16"><circle cx="8" cy="8" r="6" fill="#f08428" /><path d="M5 2q-5 4-2 8l4-1-2-3 4 1zM11 14q5-4 2-9L9 6l2 3-3 2z" fill="#fff" /></svg>
            Zoiper
          </Task>
          <Task><ChromeIcon size={16} square />[Agent Ticket Audit....</Task>
          <Task $active><AnyDeskTile size={16} />AnyDesk</Task>
        </Tasks>
        <HostTray>
          <svg width="16" height="16"><path d="M0 16l5-5M11 5l5-5" stroke="#b0b0b0" strokeWidth="2" /><path d="M4 9l3-3 3 3-3 4H3zM8 6l3-3h2v3l-3 3z" fill="#b0b0b0" /></svg>
          <AnyDeskTile size={20} />
          <svg width="20" height="20"><path d="M0 0h20v20H0z" fill="#000" /><path d="M3 3h14v14H3z" fill="#34383c" /><circle cx="10" cy="10" r="5" fill="none" stroke="#e87c30" strokeWidth="2" /><path d="M8 8q0 4 4 4" stroke="#ddd" strokeWidth="1.500" fill="none" /></svg>
          <svg width="20" height="18" viewBox="-2 0 20 18"><path d="M8 1q4 2 8 2 0 10-8 14Q0 13 0 3q4 0 8-2z" fill="#e8e8e8" /><path d="M4.500 5l7 7M11.500 5l-7 7" stroke="#c03c3c" strokeWidth="3" /></svg>
          <svg width="16" height="16"><path d="M8 0q4 0 4 5 0 4-2 5 6 2 6 6H0q0-4 6-6-2-1-2-5 0-5 4-5z" fill="#b0b0b0" /></svg>
          <span>July 19, 16:55:17</span>
          <svg width="18" height="16" fill="none" stroke="#b0b0b0" strokeWidth="1.300"><path d="M1 5h3l4-3v12l-4-3H1z" fill="#b0b0b0" /><path d="M10 5q2 3 0 6M12 3q4 5 0 10M14 1q5 7 0 14" /></svg>
        </HostTray>
      </HostPanel>
    </Desktop>
  );
}
